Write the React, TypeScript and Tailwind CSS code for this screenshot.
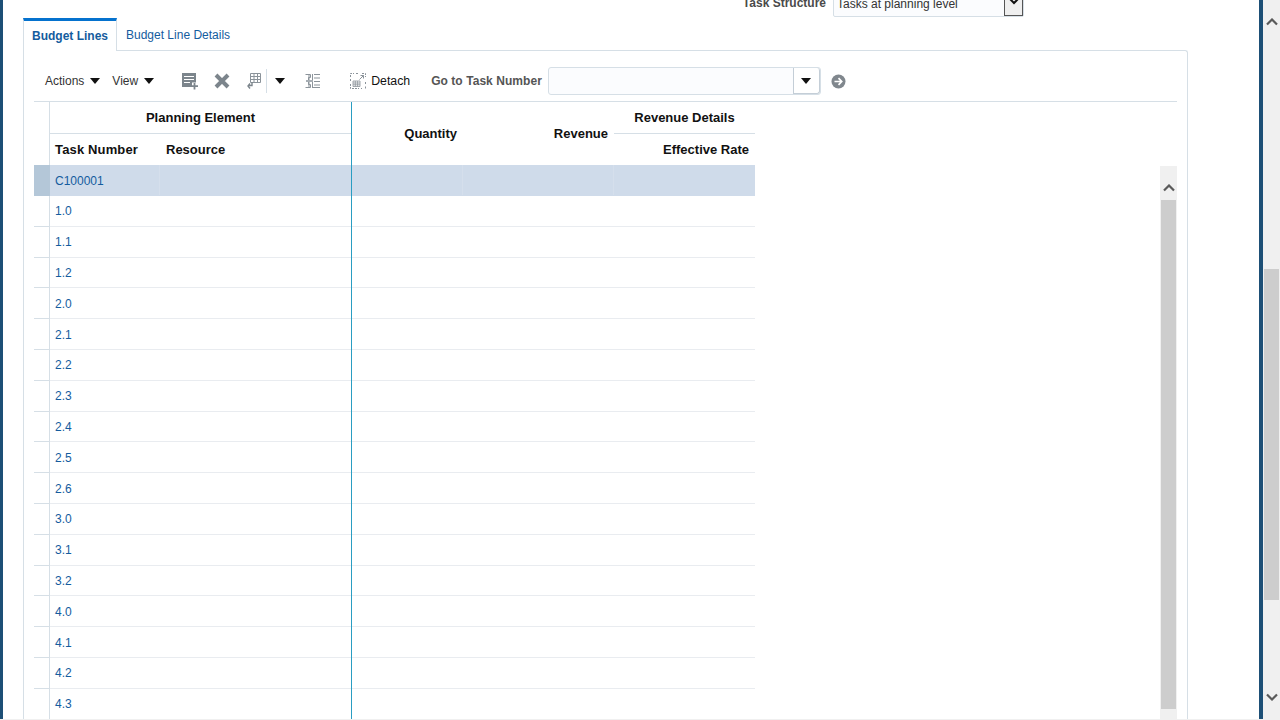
import type { ReactNode } from 'react'

const taskNumbers = ['1.0', '1.1', '1.2', '2.0', '2.1', '2.2', '2.3', '2.4', '2.5', '2.6', '3.0', '3.1', '3.2', '4.0', '4.1', '4.2', '4.3']

function Caret({ className = '' }: { className?: string }) {
  return (
    <svg width="10" height="6" viewBox="0 0 10 6" className={className}>
      <path d="M0 0h10L5 6z" fill="#111" />
    </svg>
  )
}

function Chevron({ down = false }: { down?: boolean }) {
  return (
    <svg width="12" height="8" viewBox="0 0 12 8">
      <path d={down ? 'M1 1.5l5 5 5-5' : 'M1 6.5l5-5 5 5'} fill="none" stroke="#5a5a5a" strokeWidth="2.2" />
    </svg>
  )
}

function ToolIcon({ children, className = '' }: { children: ReactNode; className?: string }) {
  return (
    <svg width="18" height="18" viewBox="0 0 18 18" className={className}>
      {children}
    </svg>
  )
}

function Row({ task, selected }: { task: string; selected?: boolean }) {
  const divider = selected ? 'border-r border-[#d5dfec]' : ''
  return (
    <div className={`flex h-[30.8px] shrink-0 border-b ${selected ? 'border-[#cfdbea] bg-[#cfdbea]' : 'border-[#e9ecf0]'}`}>
      <div className={`-mb-px w-[16px] border-b border-r ${selected ? 'border-[#b4c7d8] bg-[#b4c7d8]' : 'border-[#d6dfe6]'}`} />
      <div className={`flex w-[110px] items-center pl-[5px] pt-px text-[12px] text-[#145c9e] ${divider}`}>{task}</div>
      <div className="w-[191px]" />
      <div className="-mb-px w-px bg-[#2a9dc2]" />
      <div className={`w-[111px] ${divider}`} />
      <div className={`w-[151px] ${divider}`} />
      <div className="w-[141px]" />
    </div>
  )
}

export default function App() {
  return (
    <div className="h-[720px] w-[1280px] overflow-hidden bg-[#f0f0f0] font-['Liberation_Sans',Arial,sans-serif] text-[12px]">
      <div className="flex h-[719px] bg-white">
        <div className="w-[3px] shrink-0 bg-[#1d4f76]" />

        <main className="flex w-[1256px] shrink-0 flex-col overflow-hidden pl-[20px]">
          {/* task structure select, cut by the top of the window */}
          <div className="flex h-[17px] shrink-0 items-end pl-[719px]">
            <span className="mb-[5px] w-[91px] whitespace-nowrap pr-[7px] text-right font-bold text-[#4a4a4a]">Task Structure</span>
            <div className="flex h-[24px] w-[191px] rounded-[2px] border border-[#d6dfe6] bg-[#fbfcfe]">
              <span className="flex-1 pl-[3px] pt-px text-[#333]">Tasks at planning level</span>
              <div className="flex w-[19px] items-end justify-center border-x border-b border-[#555] bg-[#efefef] pb-[10px]">
                <svg width="12" height="8" viewBox="0 0 12 8"><path d="M1 1l5 5 5-5" fill="none" stroke="#111" strokeWidth="2" /></svg>
              </div>
            </div>
          </div>

          {/* tabs */}
          <div className="flex h-[34px] w-[1165px] shrink-0 items-stretch pt-px">
            <div className="relative w-[94px] border-x border-t-[3px] border-[#d6dfe6] border-t-[#0572ce] bg-white text-center font-bold leading-[30px] text-[#145c9e]">Budget Lines</div>
            <div className="flex-1 pl-[9px] leading-[35px] text-[#145c9e]">Budget Line Details</div>
          </div>

          {/* panel */}
          <div className="-mt-px flex min-h-0 w-[1165px] flex-1 flex-col rounded-tr-[3px] border-x border-t border-[#d6dfe6] px-[10px]">
            <div className="flex h-[51px] shrink-0 items-center border-b border-[#d6dfe6] pl-[11px] pt-[10px]">
              <span className="text-[#333]">Actions</span>
              <Caret className="ml-[6px]" />
              <span className="ml-[12px] text-[#333]">View</span>
              <Caret className="ml-[6px]" />

              <ToolIcon className="ml-[27px]">
                <path d="M1 1h14v9.5h-4V15H1z" fill="#7c858c" />
                <path d="M3 4.5h10M3 7.5h10M3 10.5h6" stroke="#fff" strokeWidth="1.2" />
                <path d="M13.5 11v6.5M10 14.2h7" stroke="#7c858c" strokeWidth="1.8" />
              </ToolIcon>
              <ToolIcon className="ml-[14px]">
                <path d="M3 3l12 12M15 3L3 15" stroke="#7c858c" strokeWidth="4" />
              </ToolIcon>
              <ToolIcon className="ml-[14px]">
                <path d="M5.5 1.5h10v9h-10zM5.5 4.5h10M5.5 7.5h10M9 1.5v9M12.5 1.5v9" fill="none" stroke="#8b939a" />
                <path d="M7 10v3.5H3.5M5 11.5l-2 2.5 2 2.5" fill="none" stroke="#7c858c" strokeWidth="1.4" />
              </ToolIcon>
              <div className="ml-[3px] h-[24px] w-px bg-[#d6dfe6]" />
              <Caret className="ml-[8px]" />
              <ToolIcon className="ml-[19px]">
                <path d="M1.5 2.5h5v3h-2v7h2v3h-5M10 2.5h6M10 6h6M10 9.5h6M10 13h6M9 15.5h7" fill="none" stroke="#8b939a" />
                <path d="M5 2v14M8.5 2v14" stroke="#8b939a" />
                <path d="M2 8h7v2H2z" fill="#a6adb3" />
              </ToolIcon>

              <svg width="16" height="16" viewBox="0 0 16 16" className="ml-[28px]">
                <path d="M.5 4V.5H4M6 .5h3M.5 6v3M.5 11v4.5H9M11 15.5h1M15.5 15.5v-2M15.5 11V9M12 .5h3.5V4" fill="none" stroke="#8b939a" strokeDasharray="2 1" />
                <path d="M3 8h7v5.5H3zM3 10h7M3 11.8h7M5.3 8v5.5M7.6 8v5.5" fill="none" stroke="#8b939a" strokeWidth=".8" />
                <path d="M9.5 6.5l4-4M10.5 2.5h3v3" fill="none" stroke="#8b939a" />
              </svg>
              <span className="ml-[5px] text-[12.3px] text-[#111]">Detach</span>

              <span className="ml-[21px] font-bold tracking-[0.06px] text-[#555]">Go to Task Number</span>
              <div className="ml-[6px] flex h-[28px] w-[273px] rounded-[3px] border border-[#d6dfe6] bg-[#fbfcfe]">
                <div className="flex-1" />
                <div className="flex w-[27px] items-center justify-center rounded-r-[3px] border-x border-b border-[#c4ced7] bg-white">
                  <Caret className="-ml-px" />
                </div>
              </div>
              <svg width="15" height="15" viewBox="0 0 15 15" className="ml-[10px]">
                <circle cx="7.5" cy="7.5" r="7" fill="#80878d" />
                <path d="M3.5 7.5h7M7.5 4.2l3.2 3.3-3.2 3.3" fill="none" stroke="#fff" strokeWidth="1.7" />
              </svg>
            </div>

            {/* grid with the inner scrollbar */}
            <div className="flex min-h-0 flex-1">
              <div className="flex w-[721px] shrink-0 flex-col">
                <div className="flex h-[63.2px] shrink-0 text-[13px] font-bold text-[#111]">
                  <div className="w-[15px]" />
                  <div className="flex w-[302px] flex-col border-l border-[#d6dfe6]">
                    <div className="flex h-[32px] items-center justify-center border-b border-[#d6dfe6]">Planning Element</div>
                    <div className="flex flex-1 items-center">
                      <span className="w-[111px] pl-[5px] tracking-[0.15px]">Task Number</span>
                      <span className="pl-[5px]">Resource</span>
                    </div>
                  </div>
                  <div className="w-px bg-[#2a9dc2]" />
                  <div className="flex w-[111px] items-center justify-end pr-[6px]">Quantity</div>
                  <div className="flex w-[151px] items-center justify-end pr-[6px]">Revenue</div>
                  <div className="flex w-[141px] flex-col">
                    <div className="flex h-[32px] items-center justify-center border-b border-[#d6dfe6]">Revenue Details</div>
                    <div className="flex flex-1 items-center justify-end pr-[6px]">Effective Rate</div>
                  </div>
                </div>
                <Row task="C100001" selected />
                {taskNumbers.map((t) => (
                  <Row key={t} task={t} />
                ))}
              </div>
              <div className="flex-1" />
              <div className="mt-[64px] flex w-[17px] shrink-0 flex-col items-center bg-[#f0f0f0]">
                <div className="flex h-[34px] w-full items-end justify-center pb-[8px]">
                  <Chevron />
                </div>
                <div className="h-[509px] w-[15px] bg-[#cdcdcd]" />
              </div>
            </div>
          </div>
        </main>

        <div className="w-[4px] shrink-0 bg-[#1d4f76]" />
        <div className="flex w-[17px] shrink-0 flex-col items-center bg-[#f0f0f0]">
          <div className="flex h-[44px] w-full items-center justify-center">
            <Chevron />
          </div>
          <div className="mt-[225px] h-[331px] w-[15px] bg-[#cdcdcd]" />
          <div className="flex flex-1 items-center justify-center pt-[74px]">
            <Chevron down />
          </div>
        </div>
      </div>
    </div>
  )
}
